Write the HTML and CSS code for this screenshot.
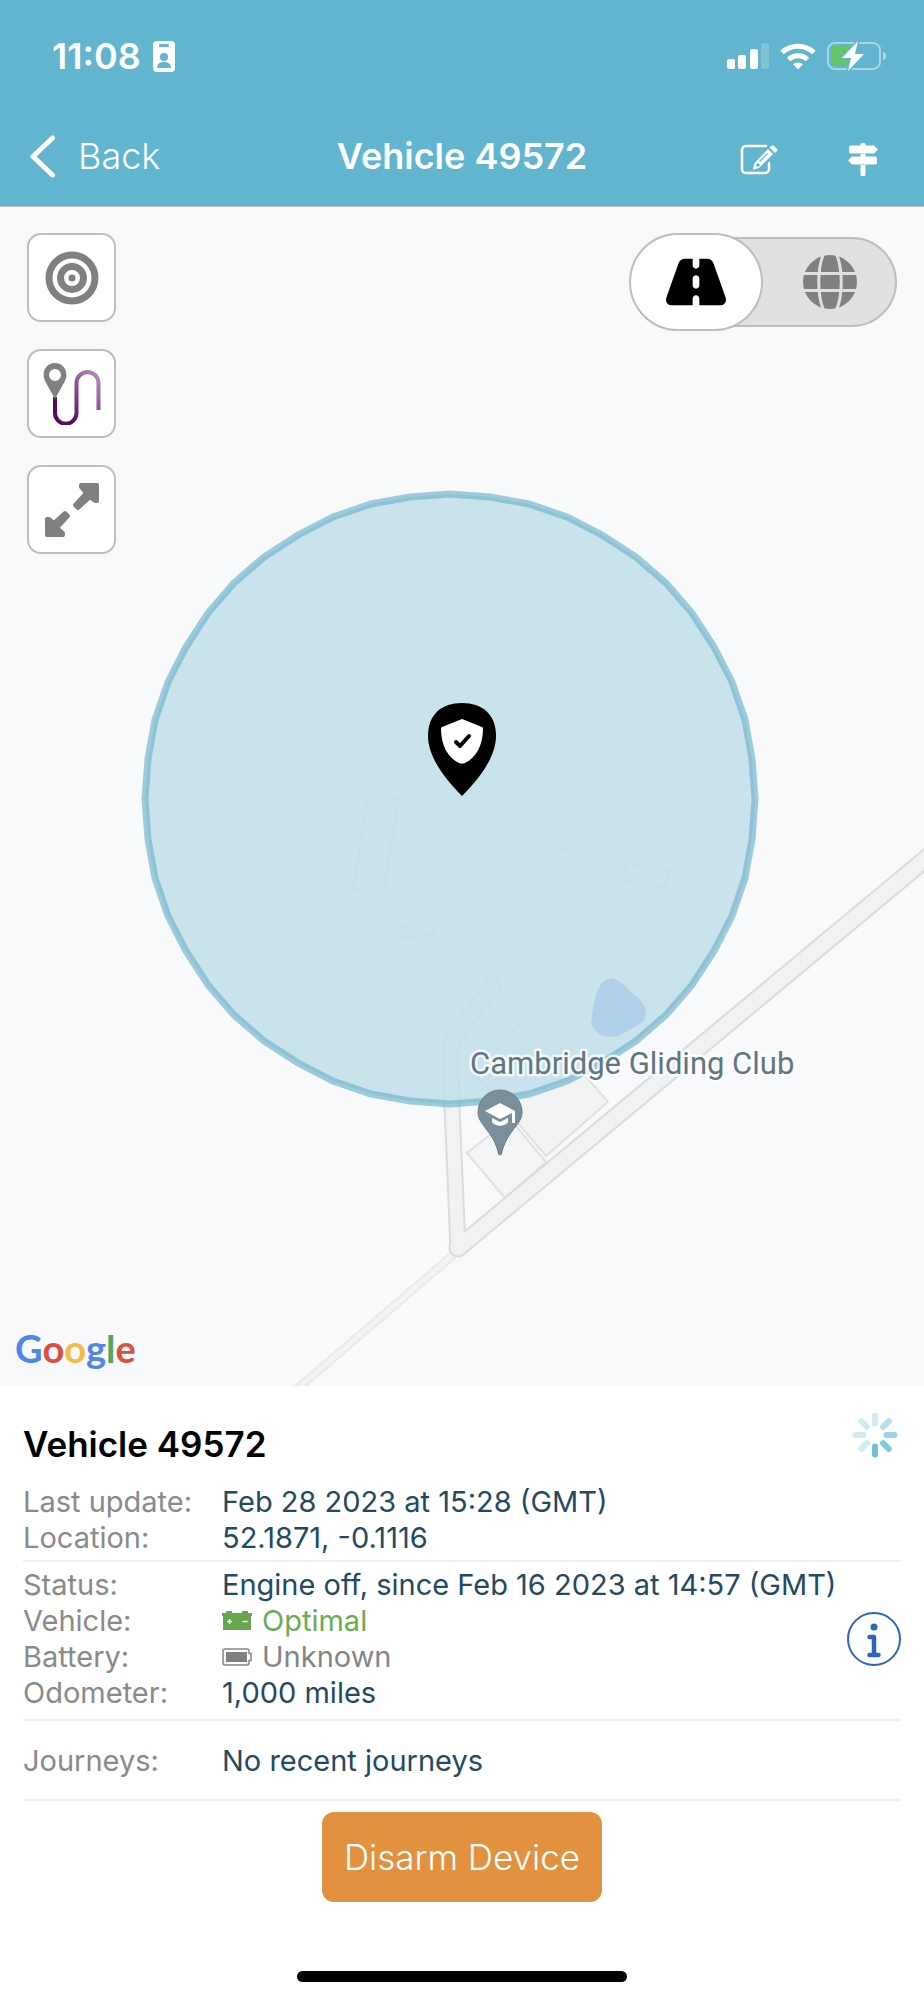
FILE: index.html
```html
<!DOCTYPE html>
<html lang="en">
<head>
  <meta charset="UTF-8">
  <meta name="viewport" content="width=device-width, initial-scale=1">
  <title>Vehicle 49572</title>
  <link rel="stylesheet" href="styles.css">
</head>
<body>

  <header class="header">
    <div class="status-bar">
      <div class="status-time">
        <span>11:08</span>
        <svg width="22" height="31" viewBox="0 0 22 31">
          <rect width="22" height="31" rx="4" fill="#fff"/>
          <rect x="6" y="3" width="10" height="3" rx="1" fill="#62b5cf"/>
          <circle cx="11" cy="16" r="4" fill="#62b5cf"/>
          <path d="M4 27c0-4 3-6 7-6s7 2 7 6z" fill="#62b5cf"/>
        </svg>
      </div>
      <div class="status-icons">
        <svg width="42" height="27" viewBox="0 0 42 27" fill="#fff">
          <rect x="0" y="16" width="8" height="10" rx="2"/>
          <rect x="11" y="12" width="8" height="14" rx="2"/>
          <rect x="23" y="6" width="8" height="20" rx="2"/>
          <rect x="34" y="0" width="8" height="26" rx="2" opacity=".2"/>
        </svg>
        <svg width="36" height="27" viewBox="0 0 36 27" fill="none" stroke="#fff" stroke-width="5">
          <path d="M2 9.500a23.500 23.500 0 0 1 32 0"/>
          <path d="M8.500 16.500a14 14 0 0 1 19 0"/>
          <path d="M18 26.500l-5-5.200a7.500 7.500 0 0 1 10 0z" fill="#fff" stroke="none"/>
        </svg>
        <svg width="60" height="30" viewBox="0 0 60 30">
          <rect x="1" y="2" width="52" height="26" rx="7" fill="none" stroke="#fff" stroke-opacity=".45" stroke-width="2"/>
          <path d="M56 10.500c4 1.500 4 7.500 0 9z" fill="#fff" fill-opacity=".5"/>
          <path d="M8 5h16v20H8a4 4 0 0 1-4-4V9a4 4 0 0 1 4-4z" fill="#65c466"/>
          <path d="M31 0L15 17h9l-3 13L37 13h-9z" fill="#fff" stroke="#62b5cf" stroke-width="3" paint-order="stroke" stroke-linejoin="round"/>
        </svg>
      </div>
    </div>

    <nav class="nav">
      <a class="back" href="#">
        <svg width="26" height="43" viewBox="0 0 26 43" fill="none" stroke="#fff" stroke-width="5" stroke-linecap="round" stroke-linejoin="round">
          <path d="M22.500 3L3 21.500l19.500 18.500"/>
        </svg>
        Back
      </a>
      <h1>Vehicle 49572</h1>
      <div class="nav-actions">
        <button type="button" aria-label="Edit">
          <svg width="38" height="32" viewBox="0 0 38 32">
            <path d="M26 3H6a4 4 0 0 0-4 4v19a4 4 0 0 0 4 4h19a4 4 0 0 0 4-4v-6" fill="none" stroke="#fff" stroke-width="2.500" stroke-linecap="round"/>
            <path d="M28 6l5 5-14 14-5 1.500a1 1 0 0 1-1-1l1.500-5.500z" fill="#fff"/>
            <path d="M29.500 4.500l1.500-1.500a2 2 0 0 1 3 0l2.500 2.500a2 2 0 0 1 0 3L35 10z" fill="#fff"/>
            <path d="M19.500 18.500l8-8" stroke="#62b5cf" stroke-width="1.200"/>
            <circle cx="18" cy="22" r="1.800" fill="#62b5cf"/>
          </svg>
        </button>
        <button type="button" aria-label="Directions">
          <svg width="30" height="33" viewBox="0 0 30 33" fill="#fff">
            <path d="M12.500 3V1.500a1.500 1.500 0 0 1 1.500-1.500h2a1.500 1.500 0 0 1 1.500 1.500V3zM12.500 11h5v3h-5zM12.500 22h5v9.500a1.500 1.500 0 0 1-1.500 1.500h-2a1.500 1.500 0 0 1-1.500-1.500z"/>
            <path d="M2.500 2.500h23.500l4 4-4 4H2.500A1.500 1.500 0 0 1 1 9V4a1.500 1.500 0 0 1 1.500-1.500z"/>
            <path d="M27.500 13.500H4l-4 4 4 4h23.500A1.500 1.500 0 0 0 29 20v-5a1.500 1.500 0 0 0-1.500-1.500z"/>
          </svg>
        </button>
      </div>
    </nav>
  </header>

  <main>
    <section class="map" aria-label="Map">
      <svg class="map-canvas" viewBox="0 207 924 1179">
        <!-- buildings and plots -->
        <g fill="#f1f3f4" stroke="#dfe1e3" stroke-width="2">
          <path d="M368 794l31 4-16 96-30-4z"/>
          <path d="M563 841l19 3-2 8-18-3z"/>
          <path d="M626 863l43 8-4 16-42-7z"/>
          <path d="M399 927l33-4 2 11-33 5z"/>
          <path d="M520 1024l12 15-50 43-13-16z"/>
          <path d="M548 1033l60 69-62 54-59-69z"/>
          <path d="M510 1119l36 43-41 36-38-45z" fill="#f4f6f5"/>
        </g>
        <!-- roads -->
        <g fill="none" stroke-linejoin="round" stroke-linecap="round">
          <path d="M452 1256L290 1395" stroke="#e9ebea" stroke-width="9"/>
          <path d="M452 1256L290 1395" stroke="#f3f5f4" stroke-width="5"/>
          <path d="M940 847L458 1248 452 1107 451 1060Q450 1043 459 1031L493 985" stroke="#dbdcde" stroke-width="17"/>
          <path d="M940 847L458 1248" stroke="#dbdcde" stroke-width="19"/>
          <path d="M940 847L458 1248 452 1107 451 1060Q450 1043 459 1031L493 985" stroke="#f1f2f3" stroke-width="13"/>
          <path d="M940 847L458 1248" stroke="#f1f2f3" stroke-width="15"/>
        </g>
        <!-- geofence -->
        <polygon fill="#c1dfe9" fill-opacity=".85" stroke="#6db2cb" stroke-opacity=".65" stroke-width="7" points="450,494 490,497 529,504 567,517 602,535 636,557 666,583 692,613 714,647 732,682 745,720 752,759 755,799 752,839 745,878 732,916 714,951 692,985 666,1015 636,1041 602,1063 567,1081 529,1094 490,1101 450,1104 410,1101 371,1094 333,1081 298,1063 264,1041 234,1015 208,985 186,951 168,916 155,878 148,839 145,799 148,759 155,720 168,682 186,647 208,613 234,583 264,557 298,535 333,517 371,504 410,497"/>
        <path d="M612 978Q622 981 630 991Q642 1000 646 1009L645 1019 640 1024 618 1036Q603 1039 596 1031L591 1024Q594 995 598 990Q602 979 612 978z" fill="#b0d1e9"/>
        <!-- place of interest -->
        <path d="M500 1155c-1 0-2-1-2-4-4-13-9-18-14-25-4-5-6-9-6-14a22 22 0 0 1 44 0c0 5-2 9-6 14-5 7-10 12-14 25 0 3-1 4-2 4z" fill="#7b8f9b" stroke="#637b88" stroke-width="1"/>
        <path d="M485 1111l15-8 15 8v12h-3v-10l-12 6z" fill="#fff"/>
        <path d="M492 1118l8 4 8-4v4c-3 5-13 5-16 0z" fill="#fff"/>
        <text class="place" x="470" y="1074">Cambridge Gliding Club</text>
        <!-- vehicle -->
        <path d="M462 796c-20-20-34-41-34-60 0-22 14-33 34-33s34 11 34 33c0 19-14 40-34 60z"/>
        <path d="M462 719l20 8q1 0 1 2c0 16-7 29-18 34q-3 1-6 0c-11-5-18-18-18-34q0-2 1-2z" fill="#fff"/>
        <path d="M456 742l4 4 9-10" fill="none" stroke="#000" stroke-width="4" stroke-linecap="round" stroke-linejoin="round"/>
      </svg>

      <div class="map-tools">
        <button type="button" aria-label="Centre on vehicle">
          <svg width="54" height="54" viewBox="0 0 54 54" fill="none" stroke="#808080" stroke-width="7">
            <circle cx="27" cy="27" r="23"/>
            <circle cx="27" cy="27" r="11.500"/>
            <circle cx="27" cy="27" r="3.500" fill="#808080" stroke="none"/>
          </svg>
        </button>
        <button type="button" aria-label="Show journey">
          <svg width="58" height="62" viewBox="0 0 58 62">
            <defs>
              <linearGradient id="trail" x1="0" y1="1" x2="1" y2="0">
                <stop offset=".2" stop-color="#570861"/>
                <stop offset="1" stop-color="#b88fc0"/>
              </linearGradient>
            </defs>
            <path d="M12 34v16a10.500 10.500 0 0 0 21.500 0V20a11 11 0 0 1 22 0v27" fill="none" stroke="url(#trail)" stroke-width="4"/>
            <path fill-rule="evenodd" d="M12 36L2 18C-2 9 3 0 12 0s14 9 10 18zM12 6a6 6 0 1 0 0 12 6 6 0 0 0 0-12z" fill="#808080"/>
          </svg>
        </button>
        <button type="button" aria-label="Full screen">
          <svg width="54" height="54" viewBox="0 0 54 54" fill="#808080" stroke="#808080" stroke-width="4" stroke-linejoin="round">
            <path d="M36 2h16v16l-2 0-5-4-12 11-3-3 11-12-5-6z"/>
            <path d="M18 52H2V36l2 0 5 4 11-10 3 3-11 12 6 5z"/>
          </svg>
        </button>
      </div>

      <div class="map-type">
        <label>
          <input type="radio" name="maptype" aria-label="Road map" checked>
          <svg width="60" height="54" viewBox="0 0 576 512">
            <path d="M256 32H181.200c-27.100 0-51.300 17.100-60.300 42.600L3.100 407.200C1.100 413 0 419.200 0 425.400 0 455.500 24.500 480 54.600 480H256v-64c0-17.700 14.300-32 32-32s32 14.300 32 32v64h201.400c30.200 0 54.600-24.500 54.600-54.600 0-6.200-1.100-12.400-3.100-18.200L455.100 74.600C446 49.100 421.900 32 394.800 32H320v64c0 17.700-14.300 32-32 32s-32-14.300-32-32V32zm64 192v64c0 17.700-14.300 32-32 32s-32-14.300-32-32v-64c0-17.700 14.300-32 32-32s32 14.300 32 32z"/>
          </svg>
        </label>
        <label>
          <input type="radio" name="maptype" aria-label="Satellite">
          <svg width="54" height="54" viewBox="0 0 54 54">
            <circle cx="27" cy="27" r="27" fill="#808080"/>
            <g fill="none" stroke="#e0e0e0" stroke-width="3">
              <path d="M0 18.500h54M0 35.500h54"/>
              <path d="M21-2c-7 15-7 43 0 58M33-2c7 15 7 43 0 58"/>
            </g>
          </svg>
        </label>
      </div>

      <a class="google" href="#"><span class="blue">G</span><span class="red">o</span><span class="yellow">o</span><span class="blue">g</span><span class="green">l</span><span class="red">e</span></a>
    </section>

    <section class="panel">
      <div class="panel-title">
        <h2>Vehicle 49572</h2>
        <svg class="spinner" width="46" height="46" viewBox="0 0 46 46" fill="none" stroke-width="6" stroke-linecap="round">
          <path d="M23 3.500v8M9.200 9.200l5.700 5.700M3.500 23h8M9.200 36.800l5.700-5.700" stroke="#d0ebf2"/>
          <path d="M36.800 9.200l-5.700 5.700" stroke="#b5dfe9"/>
          <path d="M42.500 23h-8" stroke="#9ad5e3"/>
          <path d="M36.800 36.800l-5.700-5.700" stroke="#84cadb"/>
          <path d="M23 42.500v-8" stroke="#70c0d4"/>
        </svg>
      </div>

      <dl class="details">
        <dt>Last update:</dt>
        <dd>Feb 28 2023 at 15:28 (GMT)</dd>
        <dt>Location:</dt>
        <dd>52.1871, -0.1116</dd>
      </dl>

      <div class="state">
        <dl class="details">
          <dt>Status:</dt>
          <dd>Engine off, since Feb 16 2023 at 14:57 (GMT)</dd>
          <dt>Vehicle:</dt>
          <dd class="good">
            <svg width="30" height="20" viewBox="0 0 30 20">
              <path d="M0 2h4V1q0-1 1-1h4q1 0 1 1v1h10V1q0-1 1-1h4q1 0 1 1v1h4v3h-1v14H1V5H0z" fill="#67a550"/>
              <path d="M5 10.500h5M7.500 8v5M20.500 10.500h5" stroke="#fff" stroke-width="1.500"/>
            </svg>
            Optimal
          </dd>
          <dt>Battery:</dt>
          <dd class="unknown">
            <svg width="30" height="18" viewBox="0 0 30 18">
              <path d="M3 1h22q2 0 2 2v2.500h2v7h-2V15q0 2-2 2H3q-2 0-2-2V3q0-2 2-2z" fill="none" stroke="#858585" stroke-width="1.500"/>
              <rect x="4" y="4" width="21" height="10" fill="#808080"/>
            </svg>
            Unknown
          </dd>
          <dt>Odometer:</dt>
          <dd>1,000 miles</dd>
        </dl>
        <button type="button" class="info" aria-label="Status details">
          <svg width="54" height="54" viewBox="0 0 54 54" fill="none" stroke="#2b65bd">
            <circle cx="27" cy="27" r="26" stroke-width="2"/>
            <circle cx="27" cy="15" r="3.500" fill="#2b65bd" stroke="none"/>
            <path d="M22.500 25H27v18M22.500 43h9" stroke-width="4.500" stroke-linecap="round" stroke-linejoin="round"/>
          </svg>
        </button>
      </div>

      <dl class="details journeys">
        <dt>Journeys:</dt>
        <dd>No recent journeys</dd>
      </dl>

      <button type="button" class="disarm">Disarm Device</button>
      <div class="home-bar"></div>
    </section>
  </main>

</body>
</html>
```
FILE: styles.css
```css
* {
  box-sizing: border-box;
}

body {
  margin: 0;
  background: #fff;
  color: #000;
  font-family: Inter, "Liberation Sans", sans-serif;
}

h1,
h2,
dl,
dd {
  margin: 0;
}

svg {
  display: block;
  flex: none;
}

button {
  padding: 0;
  border: none;
  background: none;
  font-family: inherit;
  cursor: pointer;
}

/* header */
.header {
  background: #62b5cf;
  color: #fff;
  border-bottom: 1px solid #bdbdbd;
}

.status-bar {
  display: flex;
  justify-content: space-between;
  align-items: center;
  height: 112px;
  padding: 0 37px 0 52px;
}

.status-time {
  display: flex;
  align-items: center;
  gap: 12px;
  font-size: 36px;
  font-weight: 600;
}

.status-icons {
  display: flex;
  align-items: center;
  gap: 11px;
}

.nav {
  display: grid;
  grid-template-columns: 1fr auto 1fr;
  align-items: center;
  height: 94px;
  padding: 0 46px 6px 30px;
}

.back {
  display: flex;
  align-items: center;
  gap: 22px;
  color: #fff;
  font-size: 36px;
  font-weight: 300;
  text-decoration: none;
}

h1 {
  margin-left: 16px;
  font-size: 36px;
  font-weight: 600;
}

.nav-actions {
  display: flex;
  justify-content: flex-end;
  align-items: center;
  gap: 70px;
  padding-top: 6px;
}

/* map */
.map {
  position: relative;
  background: #f8f9fb;
  overflow: hidden;
}

.map-canvas {
  width: 100%;
  height: auto;
}

.place {
  font-family: Roboto, sans-serif;
  font-size: 31px;
  fill: #5f7683;
  stroke: #fff;
  stroke-width: 5px;
  stroke-opacity: 0.8;
  stroke-linejoin: round;
  paint-order: stroke;
}

.map-tools {
  position: absolute;
  top: 26px;
  left: 27px;
  display: flex;
  flex-direction: column;
  gap: 27px;
}

.map-tools button {
  display: flex;
  align-items: center;
  justify-content: center;
  width: 89px;
  height: 89px;
  background: #fff;
  border: 2px solid #bdbdbd;
  border-radius: 14px;
}

.map-type {
  position: absolute;
  top: 26px;
  right: 27px;
  display: flex;
}

.map-type::before {
  content: "";
  position: absolute;
  inset: 4px 0 4px 24px;
  background: #e0e0e0;
  border: 2px solid #bdbdbd;
  border-radius: 45px;
}

.map-type label {
  position: relative;
  display: flex;
  align-items: center;
  justify-content: center;
  width: 134px;
  height: 98px;
  border-radius: 49px;
}

.map-type label:has(input:checked) {
  background: #fff;
  border: 2px solid #bdbdbd;
}

.map-type input {
  position: absolute;
  opacity: 0;
}

.google {
  position: absolute;
  left: 15px;
  bottom: 14px;
  font-family: Lato, sans-serif;
  font-size: 38px;
  font-weight: 700;
  line-height: 48px;
  text-decoration: none;
}

.blue { color: #4f86ec; }
.red { color: #d9503f; }
.yellow { color: #f2bd42; }
.green { color: #58a55c; }

/* vehicle panel */
.panel {
  padding: 26px 23px 18px;
}

.panel-title {
  display: flex;
  justify-content: space-between;
  align-items: flex-start;
  padding-right: 3px;
}

h2 {
  padding: 10px 0 18px;
  font-size: 35px;
  font-weight: 600;
  line-height: 44px;
}

.details {
  display: grid;
  grid-template-columns: 199px 1fr;
  font-size: 29px;
  line-height: 36px;
}

dt {
  color: #8a8a8a;
}

dd {
  display: flex;
  align-items: center;
  gap: 10px;
  color: #244a63;
  white-space: nowrap;
}

.good {
  color: #6aab54;
}

.unknown {
  color: #858585;
}

.state {
  display: flex;
  align-items: center;
  justify-content: space-between;
  margin-top: 4px;
  padding: 5px 0 8px;
  border-top: 2px solid #f0f0f0;
  border-bottom: 2px solid #f0f0f0;
}

.state .details {
  flex: 1;
}

.journeys {
  padding: 22px 0 20px;
  border-bottom: 2px solid #f0f0f0;
}

.disarm {
  display: block;
  width: 280px;
  height: 90px;
  margin: 11px auto 0;
  background: #e2923f;
  color: #fff;
  border-radius: 12px;
  font-size: 35px;
  font-weight: 300;
}

.home-bar {
  width: 330px;
  height: 11px;
  margin: 69px auto 0;
  background: #000;
  border-radius: 6px;
}
```
